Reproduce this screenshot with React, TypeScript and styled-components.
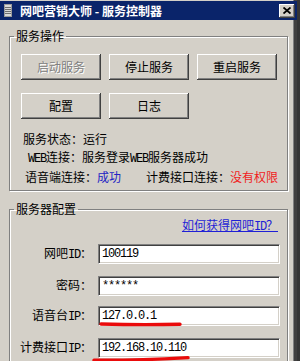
import React from "react";
import styled, { createGlobalStyle } from "styled-components";

const GlobalStyle = createGlobalStyle`
  html, body {
    margin: 0;
    padding: 0;
    background: #353535;
  }
  body {
    font-family: "Noto Sans CJK SC", "Noto Sans", sans-serif;
    font-size: 12px;
    color: #000;
  }
`;

const App: React.FC = () => {
  return (
    <>
      <GlobalStyle />
      <Window>
        <TitleBar>
          <AppIcon />
          <Title>网吧营销大师 - 服务控制器</Title>
          <CloseButton>
            <svg width="8" height="7" viewBox="0 0 8 7">
              <path d="M0.5 0.5 L7.5 6.5 M7.5 0.5 L0.5 6.5" stroke="#000" strokeWidth="1.8" />
            </svg>
          </CloseButton>
        </TitleBar>

        <Content>
          <GroupBox>
            <Legend>服务操作</Legend>
            <ServiceBody>
              <ButtonRow>
                <Button disabled>启动服务</Button>
                <Button>停止服务</Button>
                <Button>重启服务</Button>
              </ButtonRow>
              <ButtonRow>
                <Button>配置</Button>
                <Button>日志</Button>
              </ButtonRow>

              <StatusList>
                <StatusLine $indent={2}>服务状态：运行</StatusLine>
                <StatusLine $indent={7}>
                  <Half>WEB</Half>连接：服务登录<Half>WEB</Half>服务器成功
                </StatusLine>
                <StatusLine $indent={4}>
                  <Pair>
                    语音端连接：<State $tone="ok">成功</State>
                  </Pair>
                  <Pair $space={25}>
                    计费接口连接：<State $tone="bad">没有权限</State>
                  </Pair>
                </StatusLine>
              </StatusList>
            </ServiceBody>
          </GroupBox>

          <GroupBox $gap>
            <Legend>服务器配置</Legend>
            <ConfigBody>
              <HelpLink href="#">
                如何获得网吧<Half>ID</Half>？
              </HelpLink>
              <Form>
                <Label>
                  网吧<Half>ID</Half>：
                </Label>
                <Field>
                  <TextBox readOnly value="100119" />
                </Field>

                <Label>密码：</Label>
                <Field>
                  <TextBox readOnly value="******" />
                </Field>

                <Label>
                  语音台<Half>IP</Half>：
                </Label>
                <Field>
                  <TextBox readOnly value="127.0.0.1" />
                  <Mark $left={1} $top={16} width="84" height="6">
                    <path d="M2 3 C 25 3.6, 55 3.8, 81 3.2" />
                  </Mark>
                </Field>

                <Label>
                  计费接口<Half>IP</Half>：
                </Label>
                <Field>
                  <TextBox readOnly value="192.168.10.110" />
                  <Mark $left={-6} $top={18} width="100" height="8">
                    <path d="M2 5.2 C 30 5.6, 60 4.6, 96 2.6" />
                  </Mark>
                </Field>
              </Form>
            </ConfigBody>
          </GroupBox>
        </Content>
      </Window>
    </>
  );
};

export default App;

const AppIcon: React.FC = () => (
  <IconWrap>
    <svg width="8" height="13" viewBox="0 0 8 13">
      <rect x="0" y="0" width="8" height="13" fill="#9a9a9a" />
      <rect x="1" y="1" width="6" height="11" fill="#d8d8d8" />
      <path d="M1 3.5 H7 M1 5.5 H7 M1 7.5 H7 M1 9.5 H7" stroke="#6f6f6f" strokeWidth="1" />
    </svg>
  </IconWrap>
);

const Mark = styled.svg<{ $left: number; $top: number }>`
  position: absolute;
  left: ${(p) => p.$left}px;
  top: ${(p) => p.$top}px;
  overflow: visible;
  pointer-events: none;

  path {
    fill: none;
    stroke: #ea0b0b;
    stroke-width: 3.4;
    stroke-linecap: round;
  }
`;

const TextBox = styled.input`
  box-sizing: border-box;
  width: 182px;
  height: 20px;
  margin: 0;
  padding: 0 0 0 3px;
  border-top: 1px solid #808080;
  border-left: 1px solid #808080;
  border-bottom: 1px solid #fff;
  border-right: 1px solid #fff;
  box-shadow: inset 1px 1px 0 #404040, inset -1px -1px 0 #d4d0c8;
  background: #fff;
  outline: none;
  font-family: "Liberation Mono", "DejaVu Sans Mono", monospace;
  font-size: 12px;
  letter-spacing: -1.2px;
  color: #000;
`;

const Field = styled.div`
  position: relative;
  height: 20px;
`;

const Label = styled.div`
  text-align: right;
  line-height: 20px;
  white-space: nowrap;
`;

const Form = styled.div`
  display: grid;
  grid-template-columns: 72px 182px;
  column-gap: 6px;
  row-gap: 10px;
  margin-top: 8px;
  padding-left: 10px;
`;

const HelpLink = styled.a`
  align-self: flex-end;
  margin-right: 2px;
  line-height: 16px;
  color: #1f1fd6;
  text-decoration: underline;
`;

const ConfigBody = styled.div`
  display: flex;
  flex-direction: column;
  padding: 0 7px 20px 0;
`;

const State = styled.span<{ $tone: "ok" | "bad" }>`
  color: ${(p) => (p.$tone === "ok" ? "#2323c4" : "#f01c1c")};
`;

const Pair = styled.span<{ $space?: number }>`
  margin-left: ${(p) => p.$space ?? 0}px;
`;

const Half = styled.span`
  font-family: "Liberation Mono", "DejaVu Sans Mono", monospace;
  font-size: 12px;
  letter-spacing: -1.2px;
`;

const StatusLine = styled.div<{ $indent: number }>`
  padding-left: ${(p) => p.$indent}px;
  line-height: 18px;
  white-space: nowrap;
`;

const StatusList = styled.div`
  display: flex;
  flex-direction: column;
  margin-top: -2px;
`;

const Button = styled.button`
  width: 80px;
  height: 26px;
  padding: 0;
  margin: 0;
  border: none;
  background: #d4d0c8;
  box-shadow: inset -1px -1px 0 #404040, inset 1px 1px 0 #fff, inset -2px -2px 0 #808080;
  font-family: "Noto Sans CJK SC", sans-serif;
  font-size: 12px;
  line-height: 26px;
  color: #000;

  &:disabled {
    color: #808080;
    text-shadow: 1px 1px 0 #fff;
  }
`;

const ButtonRow = styled.div`
  display: flex;
  gap: 8px;
`;

const ServiceBody = styled.div`
  display: flex;
  flex-direction: column;
  gap: 13px;
  padding: 10px 0 4px 11px;
`;

const Legend = styled.legend`
  margin-left: 4px;
  padding: 0 2px;
  font-size: 12px;
  line-height: 16px;
`;

const GroupBox = styled.fieldset<{ $gap?: boolean }>`
  box-sizing: border-box;
  width: 279px;
  min-width: 0;
  margin: ${(p) => (p.$gap ? "10px" : "0")} 0 0 0;
  padding: 0;
  border: 1px solid #808080;
  box-shadow: inset 1px 1px 0 #fff, 1px 1px 0 #fff;
`;

const Content = styled.div`
  display: flex;
  flex-direction: column;
  padding: 8px 0 0 9px;
`;

const CloseButton = styled.div`
  display: flex;
  align-items: center;
  justify-content: center;
  width: 16px;
  height: 14px;
  margin-left: auto;
  background: #d4d0c8;
  box-shadow: inset -1px -1px 0 #404040, inset 1px 1px 0 #fff, inset -2px -2px 0 #808080;
`;

const Title = styled.span`
  font-weight: 700;
  white-space: nowrap;
`;

const IconWrap = styled.span`
  display: flex;
  width: 8px;
  height: 13px;
  margin-right: 8px;
`;

const TitleBar = styled.div`
  display: flex;
  align-items: center;
  height: 19px;
  padding: 0 2px 0 4px;
  background: #0a246a;
  color: #fff;
  font-size: 12px;
  line-height: 19px;
`;

const Window = styled.div`
  box-sizing: border-box;
  width: 297px;
  height: 361px;
  padding-top: 1px;
  overflow: hidden;
  background: #d4d0c8;
  box-shadow: inset -3px 0 0 #404040, inset -4px 0 0 #808080;
`;
